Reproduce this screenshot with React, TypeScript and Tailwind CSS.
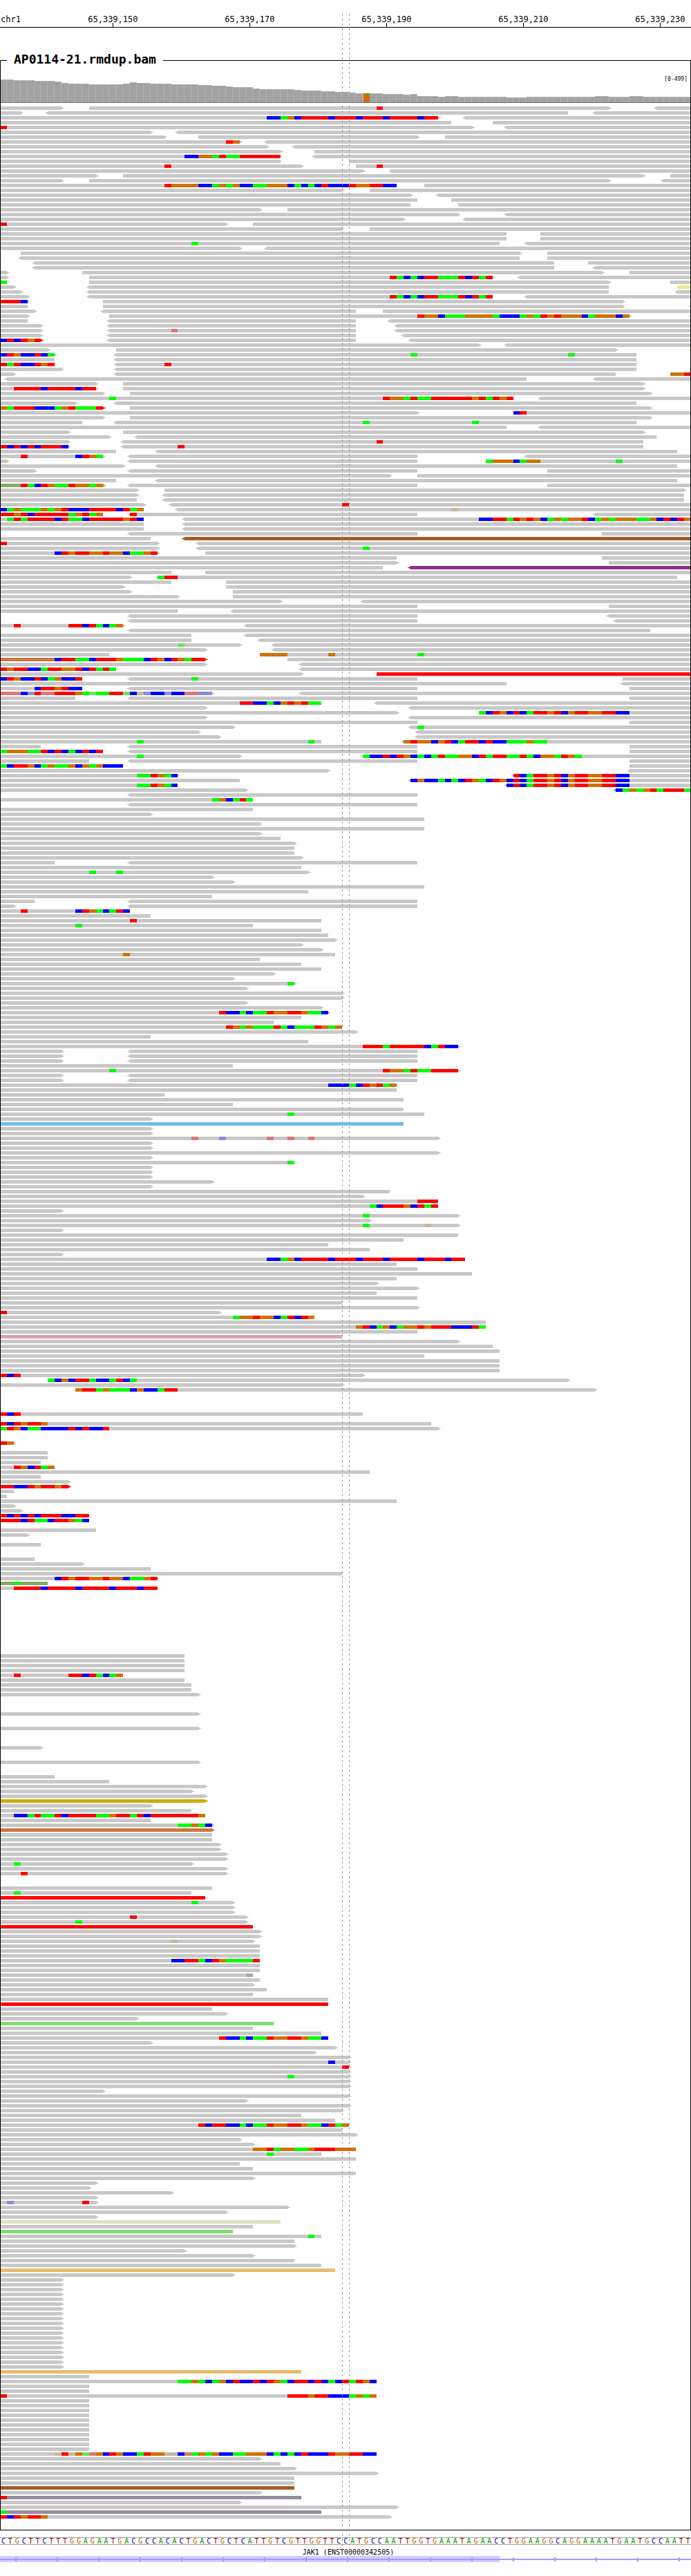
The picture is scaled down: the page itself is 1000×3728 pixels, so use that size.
import React from "react";

const BASES = 101;
const WIDTH = 1000;
const ROW = 7;

const px = (base: number) => Math.round((base * WIDTH) / BASES);

const SEQUENCE =
  "CTGCTTCTTTGGAGAATGACGCCACACTGACTGCTCATTGTCGTTGGTTCCATGCCAATTGGTGAAATAGAACCTGGAAGGCAGGAAAATGAATGCCAATT";

const TICKS = ["65,339,150", "65,339,170", "65,339,190", "65,339,210", "65,339,230"];

const BASE_FILL: Record<string, string> = {
  A: "#00ff00",
  C: "#0000ff",
  G: "#d17105",
  T: "#ff0000",
  a: "#64e664",
  c: "#8c8cd9",
  g: "#cab69f",
  t: "#df7676",
  n: "#a9a9a9",
};

const READ_FILL: Record<string, string> = {
  "": "#c8c8c8",
  y: "#f0e68c",
  r: "#ff0000",
  n: "#a65a26",
  o: "#c87840",
  e: "#87aa60",
  d: "#d4aa00",
  p: "#8f2f80",
  b: "#6fbde8",
  k: "#dca0b4",
  l: "#80de6e",
  s: "#d9e4c0",
  w: "#e6bc70",
  v: "#958ca0",
};

const LETTER: Record<string, string> = {
  A: "text-[#009600]",
  C: "text-[#00008c]",
  G: "text-[#b4640a]",
  T: "text-[#aa0000]",
};

// Pairs of [number of bases, height of the bar].
const COVERAGE: [number, number][] = [
  [2, 33], [3, 32], [3, 31], [1, 30], [1, 28], [3, 27], [5, 26], [1, 27], [1, 29], [2, 28],
  [3, 27], [4, 26], [2, 25], [2, 24], [1, 23], [3, 22], [1, 20], [5, 19], [1, 18], [3, 17],
  [2, 16], [2, 15], [1, 14], [4, 13], [3, 12], [1, 11], [1, 12], [3, 9], [1, 8], [2, 9],
  [7, 8], [3, 7], [10, 8], [2, 9], [3, 8], [2, 9], [7, 8],
];
const VARIANT_BASE = 53;

// One line per row. "from-to" is a read, "<" and ">" its strand tip, a trailing letter its
// colour; "nXYZ" are mismatched bases from base n on; "*n" repeats the row; "." is an empty row.
const READS = `
-9> 13-89> <96- 55T
-3> <7-83 <87-
-64> <68- 39CCAGCTTTTCTTTCTTTCTTTTCTT
-66 72-
-69> <74- 0T
-22> <26-
-24> 29-61> 65-
-35> <39- 33TG
-39> <43-
-41> 46-
-41 <46- 27CCGGATAATTTTTT
-41 51-
-44> 52- 24T 55T
-53> 57-
-14> 18-94> 98-
-9> 13-89> <97-
-58 62- 24TGGGGCCAGAGCCAAGGGCACACTCCCTGGTTCC
-50> 54-
-60> <64-
-61 66-
-60 67-
-38> 42-
-67> <74-
-59> <68-
-33> 37- 0T
-50> 54-
-74 79-
-74 79-
-73 <77- 28A
-35> <39-
3-76> 80-
<3-76 80-
<5-81 86-
<5-81 <87-
-1> 12-88> 92-
-1> 13-72> <76- 57TACACTTAAATCTAT
-1 13-89> 98- 0A
-2> <13-89 99-y
-3> <13-89 <99-
-4> <13-72 <77- 57TACACTTAAATCTAT
-4> 15-91> 0TTTC
-4 15-91> <101-
-5> <15-52 56-
-4> 16-92> <101- 61TGGCAAAGGGGACCCAGATGTGGGCAGGGCG
-4 <16-52 <57-
-6> <16-52 <58-
-6> <16-52 <58- 25t
-6> <16-52 <59-
-6>r <16-52 <60- 0CTCTGT
-70> <74-
-7> 17-90> <101-y
-8> <17-93 0CTGCCTCA 60A 83A
-8 <17-93
-8 <17-93 0TATCCTGT 24T
-9> <17-93
-2> <17-90 98- 98GGT
<1-77 <87-
-14> 18-94>
-14> 18-94> 2TTTTCTTTTCTT
-15> 19-95>
-75 <79- 16A 56TGGATAATTTTTTGTATGT
-11> <17-93
-15>n 19-95> 0GATTTCCCAGTAAAT
-61> 75- 75CT
-15> 19-95>
-12 <17-93 53A 69A
-74 <79-
-10> 18-94>
-16> <20-96
-10> <18-94 55T
-10> <18-94 0TCTCTCTTTC 26T
-17 <23-99
-15> <19-61 <77- 3T 11CTGA
-1> <19-61 71- 71AGGGCAGG 90A
-18> <23-99
-5> <19-61 80-
-57> 61-
-17 <23-99
-15>e <19-61 80- 3TACTGAATGGAG
-20> 24-100>
-20> <24-100
-20 <24-100
-21> <25- 50T
-21 <26- 66g 0CAGAAAGAGTCCCTTTTCTAG
-15 <19-61 <87- 0TTGTCTTTTTAGTAG 19T
-21 <27- 1ATATTTTCTAACTTTTTGTC 70CCTTATGTGCAGAGGTCAGAGGGAAGCTCTG
-21 <27-
-21 <27-
<19-61 88-
-22 <27-n
-23> <29- 0T
-23> <29- 53A
-23> 30- 8CTGTTGGTGGCAAGT
-58 88-
-58> 89-
-56 <60-p
-25 30-
-19> <23-99 23ATT
-25 33-
-18> 33-
-19> 34-
-26> 34-
-41> <53-
-61 89-
-26 <34-
<19-61 <89-
<19-61 <90-
-18> <36- 2T 10TTCTACAG
<19-95
-28 <36-
-28 <38-
-35> <40- 26a
-30> <40-
-16 38- 38GGGG 48G 61A
-30>o 42- 8CTTAACTTTGAAACTGCTGATT
-30> <44-
-17 <44- 0TGTTCCATTGGTCTATA
-44> 55-r
-12 <19-61 91- 0CTGCCTCAGCCT 28A
-74 <91-
-12 <19-61 92- 5CTTGTCC
-31> <44- 0tttCcTttTTTGAaAATTaCgcCCcCCttcc
-11 <19-61 92-
-47 <55- 35TTCCACGTGTAA
-30> <60-
-58> 70- 70ACTGCTCATTGTCGTTGGTTCC
-30> <60-
-61 92-
-34> <60- 61A
-29> <61-
-32> <61-
-47 <59- 20A 45A 59GTGGCGTCATTCTCCAAAGAA
-6 <19-61 92-
-15 <19-61 92- 0AGGGAATCTCACTCT
-35> 53- 20A 53ACCTCTGCACATAAGGCTATTAATACGGATGA
-13 <19-61 92-
-18 92- 0ACTTGCAGAAGCGAGCCC
-48> <92-
-26> <75- 20AATGAC 75TCATTGTCGTTGGTTCC
-35 <60- 60CGCCACACTGACTGCTCATTGTCGTTGGTTCC
-26 <74- 20AATGAC 74CTCATTGTCGTTGGTTCC
-36> <90-b 90CAGAGTATTTA
<19-61
-37 31AGCATA
<19-61
-37
-22>
-62
-38>
-62
-38>
-41
-43>
-43
-43
-44>
-8 <19-61
-44
-45> 13A 17A
-31>
-34>
-62
-45
-31
-5 <19-61
-2> <19-61
-19 3T 11CTGACATC
-22
-47 19T
-37 11A
-47
-48
-49>
-44>
-47>
-49 18G
-38
-44
-47
-40>
-34>
-43> 42A
-36>
-50> *2
-36>
-47>
-48> 32TCCACAATGGTTGAAC
-44
-40
-50 33TGAGAAATACAAATGAG
-52>
-22
-45
-67> 53TTTATTTTTCATCC
-9> <19-61 *3
-34
-67> 16A 56TGGATAATTTT
-9> <19-61 *2
-58 48CCCACTGTAG
-58
-24
-59
-34
-59
-62 42A
-22>
-59b
-22> *2
-64> 28t 32c 39t 42t 45t
-22> *2
-64>
-22>
-43 42A
-22> *3
-31>
-22>
-57
-53>
-64 61TTT
-64 54ACTTTGCTAT
-9>
-67> 53A
-54>
-67> 53A 62g
-9>
-67
-59
-48
-54
-9>
-68 39CCAGCTTTTCTTTCTTTCTTTTCTTTCTT
-58
-61
-69
-58
-55>
-61>
-55
-61
-50
-61>
-32> 0T
-46 34AGGTGGCATCTG
-71
-71 52GTCAGCAGGTGTTTCCCTA
-61
-50k
-67>
-72
-73
-62
-73 *3
-53> 0TCT
7-83> 7ACGCTTACCATCA
-50>
11-87> 11GTTAGAAACGCCATT
. *4
-53 0TCT
.
-63 0TCTGTTG
-64> 0ATGCAACCCCTCTCCT
. *2
-2> 0TG
.
-7 *2
-6
-8 2TGCTAG
-54
-6
-10>
-10>r 0TTCCTGTTGT
-2
-1
-58
-2>
-3>
-13 0TCTCTCTTTCCTT
-13 0TTTCTAACTTGAC
.
-14
-4>
.
-6
. *2
-5
-12>
-22
-50
-23 8CTGTTGGTGGCAAGT
-7e 2A
-23 2TTTTCTTTTCTTTTCTTTCTT
. *13
-27 *4
-18 2T 10TTCTACAG
-27
-28 *2
-29>
. *3
-29>
. *2
-29>
. *3
-6>
. *2
-29>
. *2
-8
-16
-30>
-28>
-30>
-30>d
-22>
-28
-30 2CCATAATCTTTTAAGTTATCTTTTTTTG
-22
-31> 26AAGAC
-31>o
-31 *2
-32> *2
-33> *2
-28> 2A
-33>
-33> 3T
. *2
-31
-28 2A
-30r
-34> 28A
-34> *2
-36> 19T
-36> 11A
-37r
-38> *2
-37> 25g
-38 *3
-38 25CCTTACTGAAAAT
-38 *2
-37 36n
-38
-37>
-39
-37
-48
-48r
-31
-33>
-20>
-40l
-37
-47
-48 32TCCACAATGGTTGAAC
-22>
-49>
-46>
-51>
-51> 48C
-51> 50T
-51>
-51> 42A
-51> *2
-15>
-51>
-36>
-51>
-50>
-44
-49
-51 29TCTTCCACAATGGTTGAACTAG
-50
-52>
-35>
-37>
-52 37GGTAGGAAGTTTGGG
-47 39A
-52
-35
-37
-52
-37>
-14>
-13>
-25>
-14>
-14> 1c 12T
-42>
-33>
-14>
-41s
-37
-34l
-47 45A
-43
-43>
-27>
-37>
-43
-47
-49w
-34>
-9> *19
-44w
-13
-55 26AAGACAGCTCCTCTGACTTCTCACTATGC
-13 *2
-55 0T 42TTTGTTCCCAGAG
-13 *11
-55 8gTgGatGCTGCCATGGggCtAGAGCCAAGGGCACACTCCCTGGTTCC
-38>
-41
-43>
-55>
-43 *2
-43n
-38>
-44v 0T
-35>
-58>
-47v 0A
-57> 0TCTGTTG
`;

const ROWS: string[][] = READS.trim()
  .split("\n")
  .flatMap((line) => {
    const [cells, times] = line.split(" *");
    const row = cells === "." ? [] : cells.split(" ");
    return Array.from({ length: Number(times ?? 1) }, () => row);
  });

function Read({ code, y }: { code: string; y: number }) {
  const read = /^(<?)(\d*)-(\d*)(>?)(\w?)$/.exec(code);
  if (read) {
    const [, left, from, to, right, colour] = read;
    const x0 = from ? px(Number(from)) : 0;
    const x1 = to ? px(Number(to)) : WIDTH;
    return (
      <g fill={READ_FILL[colour]}>
        <rect x={x0} y={y} width={Math.max(0, x1 - x0)} height={5} />
        {left && <path d={`M${x0} ${y + 1}h-2v1h-2v1h2v1h2z`} />}
        {right && <path d={`M${x1} ${y + 1}h2v1h2v1h-2v1h-2z`} />}
      </g>
    );
  }
  const mismatch = /^(\d+)([A-Za-z]+)$/.exec(code);
  if (!mismatch) return null;
  const start = Number(mismatch[1]);
  const runs = [...mismatch[2].matchAll(/(.)\1*/g)];
  return (
    <>
      {runs.map((run) => {
        const from = start + run.index;
        const x = px(from);
        return (
          <rect
            key={from}
            x={x}
            y={y}
            width={px(from + run[0].length) - x}
            height={5}
            fill={BASE_FILL[run[1]]}
          />
        );
      })}
    </>
  );
}

function Alignments() {
  const height = ROWS.length * ROW;
  return (
    <svg
      className="block w-full h-[3493px]"
      viewBox={`1 0 998 ${height}`}
      preserveAspectRatio="none"
      shapeRendering="crispEdges"
      role="img"
      aria-label="Aligned reads"
    >
      {ROWS.map((row, i) => (
        <g key={i}>
          {row.map((code, j) => (
            <Read key={j} code={code} y={i * ROW} />
          ))}
        </g>
      ))}
    </svg>
  );
}

function Coverage() {
  const heights = COVERAGE.flatMap(([n, h]) => Array.from({ length: n }, () => h));
  return (
    <div className="relative">
      <svg
        className="block w-full h-[53px]"
        viewBox="1 0 998 53"
        preserveAspectRatio="none"
        shapeRendering="crispEdges"
        role="img"
        aria-label="Coverage"
      >
        {heights.map((h, i) => {
          const x = px(i);
          const w = px(i + 1) - x;
          const variant = i === VARIANT_BASE;
          return (
            <g key={i}>
              <rect x={x} y={52 - h} width={w} height={h} fill="#b2b2b2" />
              <rect
                x={variant ? x + 1 : x}
                y={53 - h}
                width={w - 1}
                height={h - 1}
                fill={variant ? "#d17105" : "#a2a2a2"}
              />
              {variant && <rect x={x + 1} y={52 - h} width={w - 1} height={1} fill="#00c800" />}
            </g>
          );
        })}
        <rect x={0} y={52} width={WIDTH} height={1} fill="#6e6e6e" />
      </svg>
      <span className="absolute right-1 top-3.5 text-[8px] leading-[9px]">[0-499]</span>
    </div>
  );
}

function Ruler() {
  return (
    <header className="flex overflow-hidden border-b border-black pt-[23px] text-xs leading-[10px]">
      <div className="shrink-0 basis-[6.436%] pl-px">chr1</div>
      {TICKS.map((label) => (
        <div key={label} className="flex shrink-0 basis-[19.802%] flex-col items-center">
          <span>{label}</span>
          <span className="h-1.5 w-px bg-black" />
        </div>
      ))}
    </header>
  );
}

function Gene() {
  return (
    <section className="mt-[5px]">
      <h2 className="pl-2 text-center text-[10px] leading-[11px]">JAK1 (ENST00000342505)</h2>
      <svg
        className="block h-[9px] w-full"
        viewBox="0 0 1000 9"
        preserveAspectRatio="none"
        role="img"
        aria-label="Gene model"
      >
        <rect x={0} y={0} width={723} height={9} fill="#d2ccff" />
        <rect x={0} y={4} width={1000} height={2} fill="#a09cff" />
        {Array.from({ length: 17 }, (_, i) => (
          <path key={i} d={`M${20 + i * 60} 5l4 -4v8z`} fill="#a09cff" />
        ))}
      </svg>
    </section>
  );
}

const GUIDE =
  "pointer-events-none absolute top-5 bottom-6 w-px bg-[repeating-linear-gradient(#969696_0_3px,transparent_3px_7px)]";

export default function App() {
  return (
    <main className="relative overflow-hidden bg-white pb-5 font-['DejaVu_Sans_Mono',monospace] text-black">
      <Ruler />
      <section className="mt-[35px]">
        <div className="flex items-end">
          <div className="h-[9px] w-2.5 border-l border-t border-black" />
          <h1 className="px-2.5 text-lg leading-[21px] font-bold">AP0114-21.rmdup.bam</h1>
          <div className="h-[9px] flex-1 border-r border-t border-black" />
        </div>
        <div className="border-x border-b border-black pb-3.5">
          <Coverage />
          <div className="pt-[5px]">
            <Alignments />
          </div>
        </div>
      </section>
      <div className="mt-2.5 flex border-y border-[#a0a0a0] text-[10px] leading-[9px]">
        {[...SEQUENCE].map((base, i) => (
          <span key={i} className={`flex-1 basis-0 text-center ${LETTER[base]}`}>
            {base}
          </span>
        ))}
      </div>
      <Gene />
      <div className={`${GUIDE} left-[49.505%]`} />
      <div className={`${GUIDE} left-[50.495%]`} />
    </main>
  );
}
